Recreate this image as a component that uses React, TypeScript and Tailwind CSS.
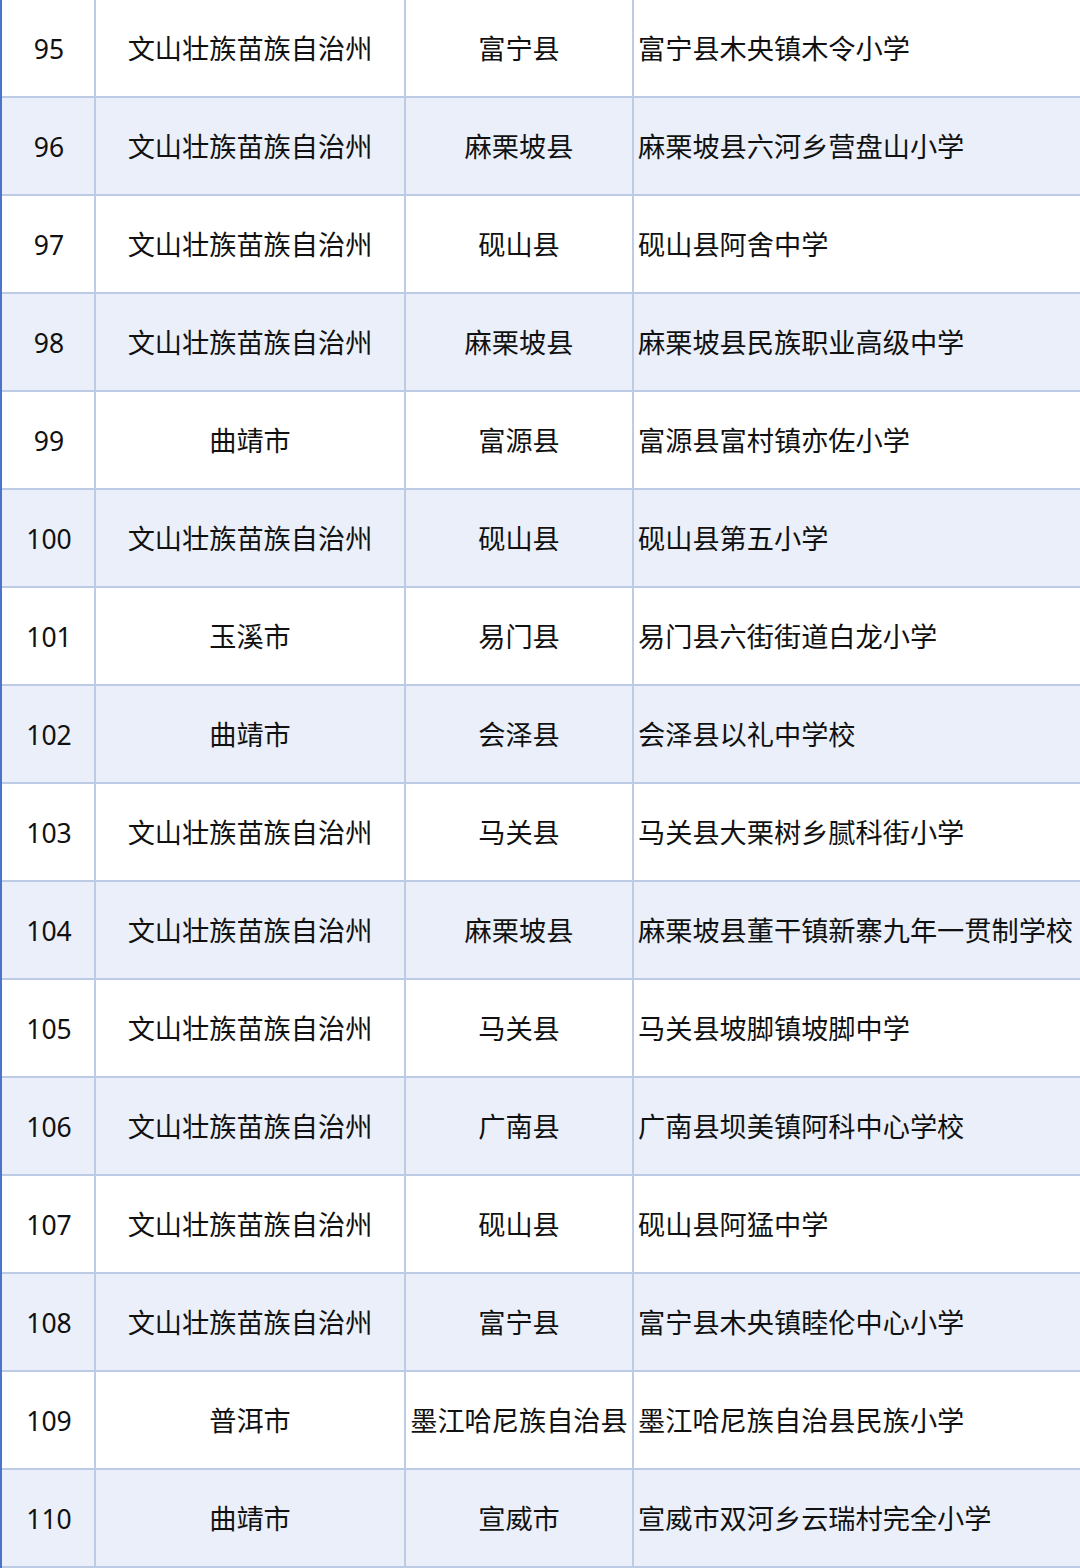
import React from 'react';

const rows: Array<[string, string, string, string]> = [
  ['95', '文山壮族苗族自治州', '富宁县', '富宁县木央镇木令小学'],
  ['96', '文山壮族苗族自治州', '麻栗坡县', '麻栗坡县六河乡营盘山小学'],
  ['97', '文山壮族苗族自治州', '砚山县', '砚山县阿舍中学'],
  ['98', '文山壮族苗族自治州', '麻栗坡县', '麻栗坡县民族职业高级中学'],
  ['99', '曲靖市', '富源县', '富源县富村镇亦佐小学'],
  ['100', '文山壮族苗族自治州', '砚山县', '砚山县第五小学'],
  ['101', '玉溪市', '易门县', '易门县六街街道白龙小学'],
  ['102', '曲靖市', '会泽县', '会泽县以礼中学校'],
  ['103', '文山壮族苗族自治州', '马关县', '马关县大栗树乡腻科街小学'],
  ['104', '文山壮族苗族自治州', '麻栗坡县', '麻栗坡县董干镇新寨九年一贯制学校'],
  ['105', '文山壮族苗族自治州', '马关县', '马关县坡脚镇坡脚中学'],
  ['106', '文山壮族苗族自治州', '广南县', '广南县坝美镇阿科中心学校'],
  ['107', '文山壮族苗族自治州', '砚山县', '砚山县阿猛中学'],
  ['108', '文山壮族苗族自治州', '富宁县', '富宁县木央镇睦伦中心小学'],
  ['109', '普洱市', '墨江哈尼族自治县', '墨江哈尼族自治县民族小学'],
  ['110', '曲靖市', '宣威市', '宣威市双河乡云瑞村完全小学'],
];

export default function App() {
  return (
    <div
      className="w-[1080px] h-[1568px] bg-white text-[#111] border-l-2 border-[#4a74c9] overflow-hidden"
      style={{ fontFamily: '"Noto Sans", "Noto Sans CJK SC", sans-serif' }}
    >
      {rows.map(([no, city, county, school], i) => (
        <div
          key={no}
          className={`grid grid-cols-[94px_310px_228px_1fr] h-[98px] border-b-2 border-[#bccbe6] ${
            i % 2 === 1 ? 'bg-[#eaeff9]' : 'bg-white'
          }`}
        >
          <div className="flex items-center justify-center pt-[3px] pl-[2px] text-[26.5px] border-r-2 border-[#bccbe6]">
            {no}
          </div>
          <div className="flex items-center justify-center pt-[3px] text-[27.2px] border-r-2 border-[#bccbe6]">{city}</div>
          <div className="flex items-center justify-center pt-[3px] text-[27.2px] whitespace-nowrap border-r-2 border-[#bccbe6]">
            {county}
          </div>
          <div className="flex items-center pt-[3px] pl-[4px] text-[27.2px] whitespace-nowrap">{school}</div>
        </div>
      ))}
    </div>
  );
}
